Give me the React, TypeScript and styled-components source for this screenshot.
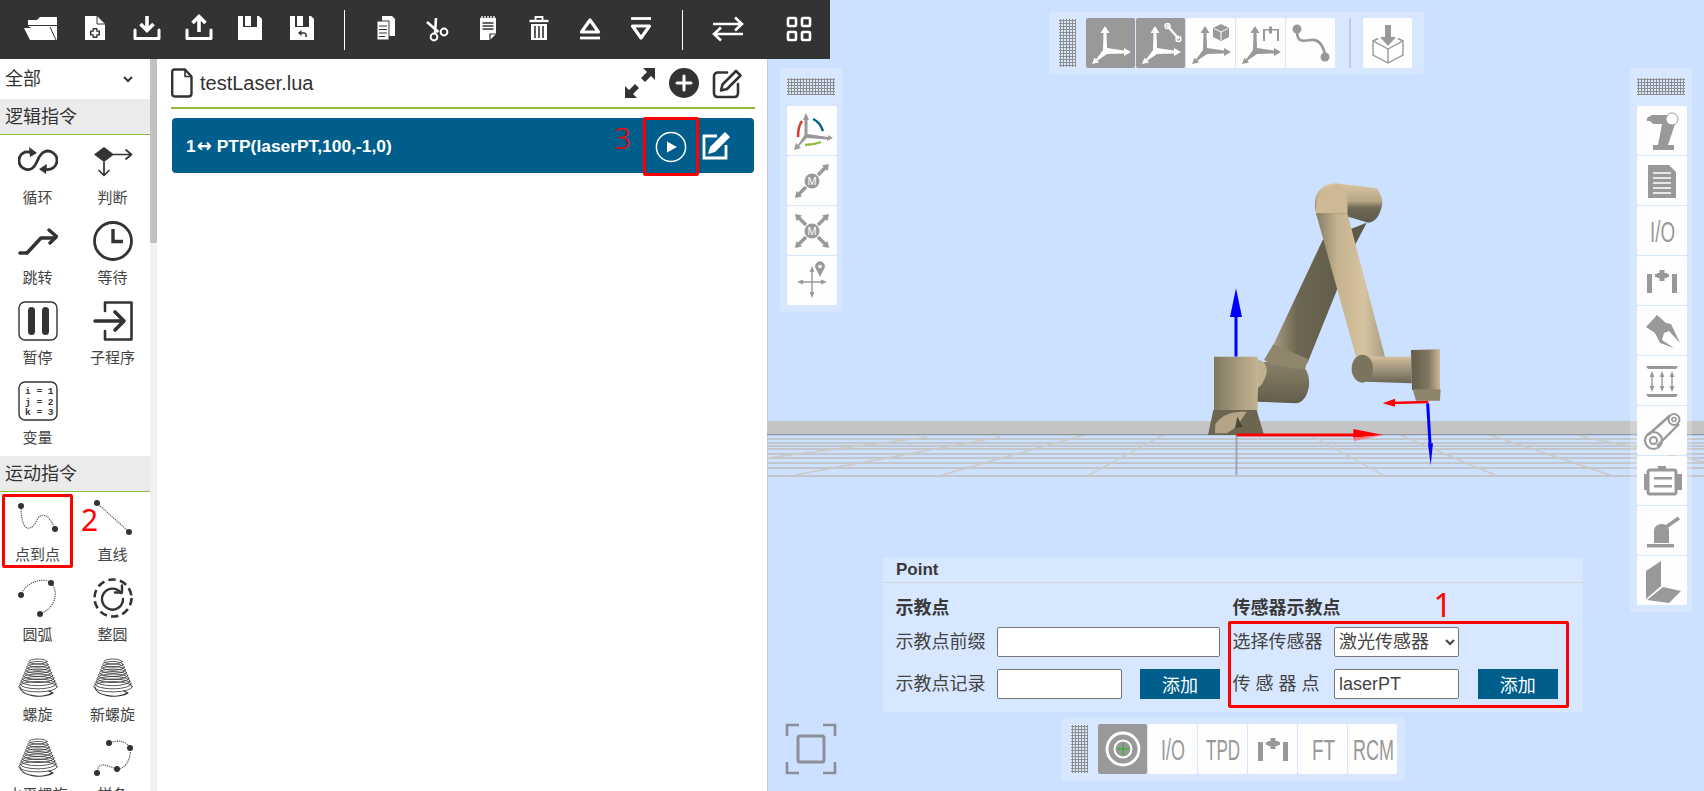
import React from 'react';
import styled, { createGlobalStyle } from 'styled-components';

const FONT = `"Liberation Sans", "Noto Sans CJK SC", sans-serif`;
const BLUE = '#005e8c';
const GREEN = '#8fbc3a';

const GlobalStyle = createGlobalStyle`
    html, body {
        margin: 0;
        padding: 0;
        height: 100%;
        overflow: hidden;
        background: #fff;
    }
    body, input, select, button {
        font-family: ${FONT};
    }
`;

const Page = styled.div`
    width: 1704px;
    height: 791px;
    display: flex;
    overflow: hidden;
    color: #333;
`;

const LeftPane = styled.div`
    width: 767px;
    flex-shrink: 0;
    display: flex;
    flex-direction: column;
`;

const WorkArea = styled.div`
    display: flex;
    flex: 1;
`;

/* ---------- top toolbar ---------- */

const Toolbar = styled.div`
    width: 830px;
    height: 59px;
    flex-shrink: 0;
    background: #333;
    display: flex;
    align-items: center;
    padding: 0 0 3px 15px;
    box-sizing: border-box;
    position: relative;
    z-index: 3;
    color: #fff;
    overflow: hidden;
`;

const ToolGroup = styled.div<{ $pitch: number }>`
    display: flex;
    flex-shrink: 0;
    & > div {
        width: ${(p) => p.$pitch}px;
    }
`;

const ToolCell = styled.div<{ $after?: number }>`
    display: flex;
    justify-content: center;
    margin-right: ${(p) => p.$after ?? 0}px;
`;

const ToolDivider = styled.span<{ $left: number; $right: number }>`
    width: 1px;
    height: 40px;
    flex-shrink: 0;
    margin: 3px ${(p) => p.$right}px 0 ${(p) => p.$left}px;
    background: #fff;
`;

const T = ({ children }: { children: React.ReactNode }) => (
    <ToolCell>
        <svg width="36" height="36" viewBox="0 0 36 36" fill="none" stroke="none">
            {children}
        </svg>
    </ToolCell>
);

const SaveBody = () => (
    <>
        <path d="M6 6H27L30 9V30H6Z" fill="#fff" />
        <rect x="11" y="6" width="14" height="11" fill="#333" />
        <rect x="13" y="6" width="6" height="10" fill="#fff" />
        <rect x="19" y="7" width="3" height="9" fill="#333" />
    </>
);

/* ---------- sidebar ---------- */

const Sidebar = styled.div`
    width: 157px;
    flex-shrink: 0;
    display: flex;
    height: 732px;
`;

const SideList = styled.div`
    width: 150px;
    overflow: hidden;
`;

const ScrollTrack = styled.div`
    width: 7px;
    background: #f1f1f1;
`;

const ScrollThumb = styled.div`
    height: 184px;
    background: #c1c1c1;
`;

const FilterSelect = styled.select`
    display: block;
    width: 136px;
    height: 40px;
    border: none;
    outline: none;
    background: transparent;
    font-size: 18px;
    color: #333;
    padding: 0 0 0 1px;
`;

const GroupTitle = styled.div<{ $first?: boolean }>`
    height: 36px;
    line-height: 36px;
    padding-left: 5px;
    font-size: 18px;
    background: #ebebeb;
    border-bottom: 1.5px solid ${GREEN};
    box-sizing: border-box;
    margin-top: ${(p) => (p.$first ? 0 : 1)}px;
`;

const CommandGrid = styled.div`
    display: grid;
    grid-template-columns: 75px 75px;
    grid-auto-rows: 80px;
`;

const Command = styled.div<{ $marked?: boolean }>`
    position: relative;
    display: flex;
    flex-direction: column;
    align-items: center;
    padding-top: 6px;
    box-sizing: border-box;
    font-size: 15px;
    line-height: 20px;
    color: #444;
    & > span {
        margin-top: 7px;
    }
    ${(p) =>
        p.$marked &&
        `&::after {
            content: '';
            position: absolute;
            top: 2px;
            left: 2px;
            width: 71px;
            height: 74px;
            box-sizing: border-box;
            border: 3px solid #f00;
            border-radius: 2px;
        }`}
`;

const Annotation = styled.i<{ $size: number; $left: number; $top: number; $light?: boolean }>`
    position: absolute;
    left: ${(p) => p.$left}px;
    top: ${(p) => p.$top}px;
    font-family: "Noto Sans", sans-serif;
    font-style: normal;
    font-weight: ${(p) => (p.$light ? 300 : 400)};
    font-size: ${(p) => p.$size}px;
    line-height: 1;
    color: #f00;
    z-index: 2;
`;

const I = ({ children }: { children: React.ReactNode }) => (
    <svg width="40" height="40" viewBox="0 0 40 40" fill="none" stroke="#333" strokeLinecap="round" strokeLinejoin="round">
        {children}
    </svg>
);

const Dot = ({ x, y }: { x: number; y: number }) => <circle cx={x} cy={y} r="3" fill="#333" stroke="none" />;

const DottedLine = ({ d }: { d: string }) => (
    <path d={d} strokeWidth="1.1" strokeDasharray="1.2 1" strokeLinecap="butt" stroke="#444" />
);

const Coil = () => {
    const rings = [0, 1, 2, 3, 4, 5, 6, 7, 8, 9];
    return (
        <>
            {rings.map((n) => (
                <ellipse key={n} cx="20" cy={3.5 + n * 2.8} rx={9 + n * 1.15} ry={2.5 + n * 0.3} strokeWidth="0.8" />
            ))}
            <path d="M2 29C3 38 24 41 34 35" strokeWidth="1.1" />
            <path d="M31 33L35 35L31 37" strokeWidth="1.1" />
        </>
    );
};

const commandsLogic: [string, React.ReactNode][] = [
    ['循环', (
        <I>
            <path strokeWidth="2.8" d="M14 12C7 9 1 13 1 19.5C1 26 7 30 13 28C20 25 19 14 26 11C32 8 39 13 39 19C39 26 33 30 26 28" />
            <path fill="#333" stroke="none" d="M11 6L19 12L12 16Z" />
            <path fill="#333" stroke="none" d="M29 23L21 28L28 33Z" />
        </I>
    )],
    ['判断', (
        <I>
            <path fill="#333" stroke="none" d="M1 13.5L11 6L21 13.5L11 21Z" />
            <path strokeWidth="1.7" d="M21 13.5H38M33 9L38.5 13.5L33 18M11 21V34M6 29.5L11 34.5L16 29.5" />
        </I>
    )],
    ['跳转', (
        <I>
            <path strokeWidth="3.6" d="M2 32H9L23 17H37" />
            <path strokeWidth="3.4" d="M31 9L38.5 15.5L32 22" />
        </I>
    )],
    ['等待', (
        <I>
            <circle cx="20" cy="20" r="18.5" strokeWidth="2.8" />
            <path strokeWidth="3.4" strokeLinecap="butt" strokeLinejoin="miter" d="M20 8V20.5H30" />
        </I>
    )],
    ['暂停', (
        <I>
            <rect x="1" y="1" width="38" height="38" rx="6" strokeWidth="1.4" />
            <rect x="10" y="6" width="7" height="28" rx="3.5" fill="#333" stroke="none" />
            <rect x="24" y="6" width="7" height="28" rx="3.5" fill="#333" stroke="none" />
        </I>
    )],
    ['子程序', (
        <I>
            <path strokeWidth="2.6" d="M12 10V1.5H38.5V38.5H12V30" />
            <path strokeWidth="3.6" d="M2 20H30M22 11L31 20L22 29" />
        </I>
    )],
    ['变量', (
        <I>
            <rect x="1" y="1" width="38" height="38" rx="6" strokeWidth="1.4" />
            <g fontFamily='"Liberation Mono", monospace' fontSize="9.5" fontWeight="700" fill="#333" stroke="none">
                <text x="7" y="13">i = 1</text>
                <text x="7" y="23.5">j = 2</text>
                <text x="7" y="34">k = 3</text>
            </g>
        </I>
    )],
];

const commandsMove: [string, React.ReactNode, boolean?][] = [
    ['点到点', (
        <I>
            <DottedLine d="M3 8C3 34 12 34 18 24C22 14 30 14 37 31" />
            <Dot x={3} y={8} />
            <Dot x={37} y={31} />
        </I>
    ), true],
    ['直线', (
        <I>
            <DottedLine d="M4 5L36 34" />
            <Dot x={4} y={5} />
            <Dot x={36} y={34} />
        </I>
    )],
    ['圆弧', (
        <I>
            <DottedLine d="M3 17C6 5 26 -2 33 5C41 13 38 30 22 36" />
            <Dot x={3} y={17} />
            <Dot x={33} y={5} />
            <Dot x={22} y={36} />
        </I>
    )],
    ['整圆', (
        <I>
            <circle cx="20" cy="20" r="18.5" strokeWidth="2.6" strokeDasharray="7.5 4.2" strokeLinecap="butt" />
            <path strokeWidth="2.4" d="M28 15A10.5 10.5 0 1 0 30 21" />
            <path strokeWidth="2.4" d="M22 14.5H29V7.5" />
        </I>
    )],
    ['螺旋', <I><Coil /></I>],
    ['新螺旋', <I><Coil /></I>],
    ['水平螺旋', <I><Coil /></I>],
    ['样条', (
        <I>
            <DottedLine d="M4 35C5 22 14 28 24 31C32 32 39 20 37 10C33 2 24 2 16 5" />
            <Dot x={4} y={35} />
            <Dot x={24} y={31} />
            <Dot x={37} y={10} />
            <Dot x={16} y={5} />
        </I>
    )],
];

/* ---------- program editor ---------- */

const Editor = styled.div`
    flex: 1;
    padding: 0 12px 0 14px;
`;

const FileBar = styled.div`
    height: 48px;
    display: flex;
    align-items: center;
    gap: 7px;
    border-bottom: 2px solid ${GREEN};
    box-sizing: content-box;
`;

const FileName = styled.span`
    font-size: 20px;
    color: #333;
    flex: 1;
`;

const FileActions = styled.div`
    display: flex;
    align-items: center;
    gap: 13px;
    margin-right: 12px;
`;

const ProgramRow = styled.div`
    position: relative;
    margin: 9px 1px 0;
    height: 55px;
    background: ${BLUE};
    border-radius: 4px;
    display: flex;
    align-items: center;
    padding-left: 14px;
    color: #fff;
    font-size: 17.4px;
    font-weight: 700;
`;

const RowText = styled.span`
    flex: 1;
    white-space: nowrap;
`;

const RowArrow = styled.span`
    font-family: "DejaVu Sans", sans-serif;
    font-size: 18px;
    margin: 0 5px 0 1px;
`;

const PlayBox = styled.div`
    width: 56px;
    height: 59px;
    margin-top: 2px;
    box-sizing: border-box;
    border: 3px solid #f00;
    border-radius: 2px;
    display: flex;
    align-items: center;
    justify-content: center;
`;

const RowEdit = styled.div`
    margin: 0 23px 0 3px;
    display: flex;
`;

/* ---------- 3d canvas ---------- */

const Canvas = styled.div`
    position: relative;
    flex: 1;
    height: 791px;
    background: #cce0ff;
    box-shadow: inset 1px 0 #c6cad0;
    overflow: hidden;
`;

const Scene = styled.svg`
    position: absolute;
    inset: 0;
`;

const Floating = styled.div`
    position: absolute;
    display: flex;
    box-sizing: border-box;
    background: rgba(255, 255, 255, 0.22);
    border-radius: 3px;
`;

const TopPanel = styled(Floating)`
    left: 282px;
    top: 12px;
    width: 375px;
    height: 62px;
    padding: 6px 0 0 10px;
    gap: 1px;
`;

const BottomPanel = styled(Floating)`
    left: 294px;
    top: 718px;
    width: 344px;
    height: 63px;
    padding: 6px 0 0 10px;
    gap: 1px;
`;

const SidePanel = styled(Floating)`
    top: 68px;
    flex-direction: column;
    padding: 10px 0 0 6.5px;
    gap: 1px;
    width: 62px;
`;

const LeftPanel = styled(SidePanel)`
    left: 13px;
    height: 244px;
`;

const RightPanel = styled(SidePanel)`
    left: 863px;
    height: 544px;
`;

const Grip = styled.div<{ $vertical?: boolean }>`
    width: ${(p) => (p.$vertical ? 17 : 48)}px;
    height: ${(p) => (p.$vertical ? 48 : 17)}px;
    flex-shrink: 0;
    margin: ${(p) => (p.$vertical ? '1px 9px 0 0' : '0 0 10px 0')};
    background-image: radial-gradient(circle, #8e8e8e 1px, transparent 1.2px);
    background-size: 3px 3px;
`;

const ToolButton = styled.div<{ $active?: boolean; $tall?: boolean }>`
    width: ${(p) => (p.$tall ? 49 : 50)}px;
    height: ${(p) => (p.$tall ? 50 : 49)}px;
    flex-shrink: 0;
    display: flex;
    align-items: center;
    justify-content: center;
    border-radius: 2px;
    background: ${(p) => (p.$active ? '#999' : 'rgba(255, 255, 255, 0.96)')};
    color: ${(p) => (p.$active ? '#fff' : '#999')};
`;

const PanelRule = styled.span`
    width: 2px;
    height: 50px;
    margin: 0 11px 0 13px;
    background: #c6cad0;
`;

const FocusButton = styled.div`
    position: absolute;
    left: 18px;
    top: 723px;
    color: #8a8f96;
    display: flex;
`;

const B = ({ children }: { children: React.ReactNode }) => (
    <svg width="48" height="48" viewBox="0 0 48 48" fill="currentColor" stroke="none">
        {children}
    </svg>
);

const Axes = () => (
    <path d="M16 31L16.5 14H13.5L18 7L22.5 14H19.5L20 29L37 31.5V29L44 33L37 37V34.5L20 35L10.5 41.5L12 43.5L5 45L7.5 38.5L9 40.5Z" />
);

const Stretched = ({ x, y, w, size = 30, children }: { x: number; y: number; w: number; size?: number; children: string }) => (
    <text x={x} y={y} textLength={w} lengthAdjust="spacingAndGlyphs" fontFamily='"Liberation Sans", sans-serif' fontSize={size} fill="currentColor">
        {children}
    </text>
);

const MBadge = ({ cx, cy }: { cx: number; cy: number }) => (
    <>
        <circle cx={cx} cy={cy} r="7.5" />
        <text x={cx} y={cy + 4} textAnchor="middle" fontSize="11" fontFamily='"Liberation Sans", sans-serif' fill="#fff">M</text>
    </>
);

const DiagArrow = ({ x1, y1, x2, y2, thin }: { x1: number; y1: number; x2: number; y2: number; thin?: boolean }) => {
    const a = (Math.atan2(y2 - y1, x2 - x1) * 180) / Math.PI;
    const len = Math.hypot(x2 - x1, y2 - y1);
    const s = thin ? 0.7 : 1.7;
    const h = thin ? 2.4 : 4;
    return (
        <g transform={`translate(${x1} ${y1}) rotate(${a})`}>
            <path d={`M0 -${s}H${len - 6}V-${h}L${len} 0L${len - 6} ${h}V${s}H0Z`} />
        </g>
    );
};

const GripperShape = () => (
    <>
        <rect x="9" y="17" width="5" height="19" />
        <rect x="34" y="17" width="5" height="19" />
        <rect x="17" y="17" width="14" height="3" />
        <rect x="21.5" y="13" width="5" height="11" />
        <rect x="19" y="16" width="10" height="5" />
    </>
);

const Point3DCube = () => (
    <>
        <path d="M34 5L42 9V18L34 22L26 18V9Z" />
        <path d="M27 9.5L34 13L41 9.5M34 13V21" stroke="#fff" strokeWidth="1" fill="none" />
    </>
);

/* ---------- point dialog ---------- */

const PointPanel = styled.div`
    position: absolute;
    left: 116px;
    top: 558px;
    width: 700px;
    height: 154px;
    background: rgba(255, 255, 255, 0.22);
    color: #444;
`;

const PointHeader = styled.div`
    height: 25px;
    line-height: 24px;
    padding-left: 13px;
    font-size: 17px;
    font-weight: 700;
    border-bottom: 1px solid #d3d6d8;
    box-sizing: border-box;
    color: #3a3a3a;
`;

const PointBody = styled.div`
    display: flex;
    gap: 12px;
    padding: 14px 12.5px 0;
`;

const PointColumn = styled.div`
    position: relative;
    width: 325px;
    display: flex;
    flex-direction: column;
`;

const PointHeading = styled.div`
    font-size: 18px;
    font-weight: 700;
    line-height: 22px;
    margin-bottom: 8px;
    color: #3a3a3a;
`;

const FormRow = styled.div`
    display: flex;
    align-items: center;
    height: 30px;
    margin-bottom: 12px;
`;

const FieldLabel = styled.label`
    width: 101.5px;
    flex-shrink: 0;
    font-size: 18px;
    white-space: nowrap;
    line-height: 30px;
    height: 30px;
`;

const TextField = styled.input<{ $width: number }>`
    width: ${(p) => p.$width}px;
    height: 30px;
    box-sizing: border-box;
    border: 1px solid #767676;
    border-radius: 2px;
    background: #fff;
    padding: 0 4px;
    font-size: 18px;
    color: #444;
    outline: none;
`;

const SelectField = styled.select`
    width: 125px;
    height: 30px;
    box-sizing: border-box;
    border: 1px solid #767676;
    border-radius: 2px;
    background: #fff;
    font-size: 18px;
    color: #444;
    outline: none;
`;

const AddButton = styled.button<{ $gap: number }>`
    width: 80px;
    height: 30px;
    margin-left: ${(p) => p.$gap}px;
    padding: 0;
    border: none;
    background: ${BLUE};
    color: #fff;
    font-size: 18px;
`;

const RedFrame = styled.div`
    position: absolute;
    left: -5px;
    top: 24px;
    width: 341px;
    height: 87px;
    box-sizing: border-box;
    border: 3px solid #f00;
    border-radius: 2px;
    pointer-events: none;
`;

const OverlayGradients = () => (
    <defs>
        <linearGradient id="armGrad" x1="0" y1="0" x2="1" y2="0">
            <stop offset="0" stopColor="#857c64" />
            <stop offset="0.3" stopColor="#c4b18e" />
            <stop offset="0.7" stopColor="#d6c3a0" />
            <stop offset="1" stopColor="#a89c7f" />
        </linearGradient>
        <linearGradient id="baseGrad" x1="0" y1="0" x2="1" y2="0">
            <stop offset="0" stopColor="#7f775f" />
            <stop offset="0.6" stopColor="#ab9e80" />
            <stop offset="1" stopColor="#c3b28f" />
        </linearGradient>
        <linearGradient id="lowerGrad" x1="0" y1="0" x2="1" y2="0">
            <stop offset="0" stopColor="#a89c7e" />
            <stop offset="0.25" stopColor="#6d6752" />
            <stop offset="1" stopColor="#5a5645" />
        </linearGradient>
        <linearGradient id="wristGrad" x1="0" y1="0" x2="0" y2="1">
            <stop offset="0" stopColor="#d2bf9b" />
            <stop offset="0.5" stopColor="#9d917a" />
            <stop offset="1" stopColor="#6a6451" />
        </linearGradient>
        <linearGradient id="flangeGrad" x1="0" y1="0" x2="1" y2="0">
            <stop offset="0" stopColor="#625d4b" />
            <stop offset="0.6" stopColor="#7f775f" />
            <stop offset="1" stopColor="#cbb997" />
        </linearGradient>
        <linearGradient id="jointGrad" x1="0" y1="0" x2="0" y2="1">
            <stop offset="0" stopColor="#8b8269" />
            <stop offset="1" stopColor="#625d4b" />
        </linearGradient>
        <linearGradient id="elbowGrad" x1="0" y1="0" x2="0" y2="1">
            <stop offset="0" stopColor="#d9c6a3" />
            <stop offset="0.45" stopColor="#b7a785" />
            <stop offset="0.62" stopColor="#6f6955" />
            <stop offset="1" stopColor="#5f5a48" />
        </linearGradient>
    </defs>
);

const FloorGrid = () => {
    const rows = [438, 442, 445, 448, 453, 457, 462, 467, 475];
    const rays: [number, number, number, number][] = [
        [767, 458, 927, 437], [795, 475, 1000, 437], [942, 475, 1084, 435], [1089, 475, 1167, 433],
        [1383, 475, 1310, 435], [1495, 475, 1400, 435], [1610, 475, 1490, 435], [1704, 462, 1580, 436],
    ];
    return (
        <g>
            <rect x="767" y="421" width="937" height="14" fill="#c3c4c3" />
            {rows.map((y) => (
                <rect key={y} x="767" y={y} width="937" height="2" fill="#c2c6cb" />
            ))}
            {rays.map(([a, b, c, d]) => (
                <line key={a} x1={a} y1={b} x2={c} y2={d} stroke="#cdc9c3" strokeWidth="1.4" />
            ))}
            <rect x="767" y="434" width="937" height="1.3" fill="#8f969c" />
            <rect x="1235.5" y="435" width="1.8" height="40" fill="#9ba1a8" />
        </g>
    );
};

const Robot = () => (
    <g transform="translate(1100 160) scale(0.33333)">
        <path d="M408 590V470" stroke="#00f" strokeWidth="9" />
        <path d="M408 385L390 471H426Z" fill="#00f" />
        <path d="M520 555L668 240L800 188L760 265L710 392L622 610Z" fill="url(#lowerGrad)" />
        <path d="M480 610C540 590 590 610 615 625C640 660 625 725 590 730L470 725Z" fill="url(#jointGrad)" />
        <path d="M492 600L520 553L625 597L615 626C570 628 525 615 492 600Z" fill="#8f866c" />
        <path d="M473 600C495 600 505 625 498 645C490 670 480 680 472 685Z" fill="#c2b18e" />
        <path d="M342 590H473V752H342Z" fill="url(#baseGrad)" />
        <path d="M340 750H470L492 825H324Z" fill="#6c6651" />
        <path d="M346 792C370 760 395 755 440 755L410 800L380 820H345Z" fill="#b5a586" />
        <path d="M412 770L428 800L405 805Z" fill="#4b4838" />
        <path d="M645 130C645 90 675 70 710 70L830 85C845 105 850 125 845 140C838 170 825 185 805 188L745 170L652 172C648 160 645 145 645 130Z" fill="url(#elbowGrad)" />
        <path d="M648 160L768 590L855 590L742 160Z" fill="url(#armGrad)" />
        <path d="M648 160C645 130 650 90 710 72C735 74 745 100 742 160Z" fill="#cdb996" />
        <path d="M800 590H935V670L800 665Z" fill="url(#wristGrad)" />
        <ellipse cx="787" cy="626" rx="32" ry="42" fill="#7b745d" />
        <path d="M933 570L1020 568V692L936 690Z" fill="url(#flangeGrad)" />
        <path d="M938 688H1022L1020 722H948Z" fill="#8d8469" />
        <path d="M985 726L870 729" stroke="#f00" strokeWidth="8" />
        <path d="M885 716L848 730L885 740Z" fill="#f00" />
        <path d="M983 730L990 850" stroke="#00f" strokeWidth="9" />
        <path d="M984 850L999 850L992 916Z" fill="#00f" />
        <path d="M410 825H770" stroke="#f00" strokeWidth="9" />
        <path d="M760 807L850 825L760 833Z" fill="#f00" />
        <path d="M760 833L850 825L762 843Z" fill="#f77" />
    </g>
);

const App = () => {
    return (
        <Page>
            <GlobalStyle />
            <LeftPane>
                <Toolbar>
                    <ToolGroup $pitch={51.6}>
                        <ToolCell $after={3}>
                            <svg width="36" height="36" viewBox="0 0 36 36">
                                <path d="M5 10H14L17 7H34V30H28L5 16Z" fill="#fff" />
                                <path d="M1 18H27L33 30H7Z" fill="#fff" />
                                <path d="M27 17L33 30" stroke="#333" strokeWidth="1" />
                                <path d="M5 15.5H34" stroke="#333" strokeWidth="1" />
                            </svg>
                        </ToolCell>
                        <T>
                            <path d="M8 6H20L28 14V30H8Z" fill="#fff" />
                            <path d="M20 6V14H28" fill="none" stroke="#333" strokeWidth="1" />
                            <path d="M18 18V28M13 23H23" stroke="#333" strokeWidth="5" />
                            <path d="M18 19.5V26.5M14.5 23H21.5" stroke="#fff" strokeWidth="2.4" />
                        </T>
                        <T>
                            <path d="M6 20V28.5H30V20" stroke="#fff" strokeWidth="3" strokeLinecap="round" strokeLinejoin="round" />
                            <path d="M18 6V20M11.5 14L18 20.5L24.5 14" stroke="#fff" strokeWidth="3.6" strokeLinejoin="miter" />
                        </T>
                        <T>
                            <path d="M6 20V28.5H30V20" stroke="#fff" strokeWidth="3" strokeLinecap="round" strokeLinejoin="round" />
                            <path d="M18 22V7M11.5 13L18 6.5L24.5 13" stroke="#fff" strokeWidth="3.6" strokeLinejoin="miter" />
                        </T>
                        <T><SaveBody /></T>
                        <T>
                            <SaveBody />
                            <path d="M14 23L17.5 20V26Z" fill="#333" />
                            <path d="M16 23H20C22 23 22.5 25 22 27" stroke="#333" strokeWidth="1.5" />
                        </T>
                    </ToolGroup>
                    <ToolDivider $left={16} $right={16} />
                    <ToolGroup $pitch={51}>
                        <T>
                            <path d="M14 6H24L27 9V26H14Z" fill="#fff" />
                            <path d="M9 11H21V30H9Z" fill="#fff" stroke="#333" strokeWidth="1" />
                            <path d="M11 16H19M11 19.5H19M11 23H19M11 26.5H17" stroke="#333" strokeWidth="1.2" />
                        </T>
                        <T>
                            <path d="M8 12L19.5 22M17 8L16 24" stroke="#fff" strokeWidth="2.6" />
                            <circle cx="25" cy="22" r="3.4" stroke="#fff" strokeWidth="2" />
                            <circle cx="15" cy="27" r="3.4" stroke="#fff" strokeWidth="2" />
                        </T>
                        <T>
                            <path d="M10 8H26V24L20 30H10Z" fill="#fff" />
                            <path d="M12 6V10M15 6V10M18 6V10M21 6V10M24 6V10" stroke="#fff" strokeWidth="1.4" />
                            <path d="M12.5 13H23.5M12.5 16H23.5M12.5 19H23.5" stroke="#333" strokeWidth="1.4" />
                            <path d="M20 30V24H26" stroke="#333" strokeWidth="1.2" />
                        </T>
                        <T>
                            <path d="M8.5 11H27.5" stroke="#fff" strokeWidth="2.4" />
                            <path d="M14.5 10V7H21.5V10" stroke="#fff" strokeWidth="1.8" />
                            <path d="M10 14H26V30H10Z" fill="#fff" />
                            <path d="M14 16V28M18 16V28M22 16V28" stroke="#333" strokeWidth="1.6" />
                        </T>
                        <T>
                            <path d="M18 10L26.5 22H9.5Z" stroke="#fff" strokeWidth="3.2" strokeLinejoin="round" />
                            <path d="M8 28H28" stroke="#fff" strokeWidth="2.8" />
                        </T>
                        <T>
                            <path d="M8 8.5H28" stroke="#fff" strokeWidth="2.8" />
                            <path d="M18 28L9.5 16H26.5Z" stroke="#fff" strokeWidth="3.2" strokeLinejoin="round" />
                        </T>
                    </ToolGroup>
                    <ToolDivider $left={15.5} $right={9.4} />
                    <ToolGroup $pitch={71}>
                        <T>
                            <path d="M3 14H31M25 7.5L32 14L25 20.5" stroke="#fff" strokeWidth="2.6" />
                            <path d="M33 24H5M11 17.5L4 24L11 30.5" stroke="#fff" strokeWidth="2.6" />
                        </T>
                        <T>
                            <rect x="7" y="8" width="8" height="8" rx="1" stroke="#fff" strokeWidth="2.6" />
                            <rect x="21" y="8" width="8" height="8" rx="1" stroke="#fff" strokeWidth="2.6" />
                            <rect x="7" y="22" width="8" height="8" rx="1" stroke="#fff" strokeWidth="2.6" />
                            <rect x="21" y="22" width="8" height="8" rx="1" stroke="#fff" strokeWidth="2.6" />
                        </T>
                    </ToolGroup>
                </Toolbar>
                <WorkArea>
                    <Sidebar>
                        <SideList>
                            <FilterSelect defaultValue="all">
                                <option value="all">全部</option>
                            </FilterSelect>
                            <GroupTitle $first>逻辑指令</GroupTitle>
                            <CommandGrid>
                                {commandsLogic.map(([label, icon]) => (
                                    <Command key={label}>
                                        {icon}
                                        <span>{label}</span>
                                    </Command>
                                ))}
                            </CommandGrid>
                            <GroupTitle>运动指令</GroupTitle>
                            <CommandGrid>
                                {commandsMove.map(([label, icon, marked]) => (
                                    <Command key={label} $marked={marked}>
                                        {icon}
                                        <span>{label}</span>
                                        {marked && <Annotation $size={30} $left={81} $top={13}>2</Annotation>}
                                    </Command>
                                ))}
                            </CommandGrid>
                        </SideList>
                        <ScrollTrack>
                            <ScrollThumb />
                        </ScrollTrack>
                    </Sidebar>
                    <Editor>
                        <FileBar>
                            <svg width="22" height="30" viewBox="0 0 22 30" fill="none" stroke="#333" strokeWidth="2.4" strokeLinejoin="round">
                                <path d="M3.5 1.5H14L20.5 8.5V25.5C20.5 27.5 19.5 28.5 17.5 28.5H3.5C2 28.5 1.2 27.5 1.2 26V4C1.2 2.5 2 1.5 3.5 1.5Z" />
                                <path d="M14 1.5V8.5H20.5" strokeWidth="1.6" />
                            </svg>
                            <FileName>testLaser.lua</FileName>
                            <FileActions>
                                <svg width="32" height="32" viewBox="0 0 32 32" fill="#333">
                                    <path d="M19 1H31V13L27 9L21 15L17 11L23 5Z" />
                                    <path d="M13 31H1V19L5 23L11 17L15 21L9 27Z" />
                                </svg>
                                <svg width="30" height="30" viewBox="0 0 30 30">
                                    <circle cx="15" cy="15" r="15" fill="#333" />
                                    <path d="M15 8V22M8 15H22" stroke="#fff" strokeWidth="3" strokeLinecap="round" />
                                </svg>
                                <svg width="31" height="31" viewBox="0 0 31 31" fill="none" stroke="#333" strokeWidth="2.6" strokeLinecap="round" strokeLinejoin="round">
                                    <path d="M15 4.5H6C3.5 4.5 2 6 2 8.5V25C2 27.5 3.5 29 6 29H22C24.5 29 26 27.5 26 25V16" />
                                    <path d="M24 3L28.5 7.5L15 21L9 22.5L10.5 16.5Z" />
                                </svg>
                            </FileActions>
                        </FileBar>
                        <ProgramRow>
                            <RowText>1<RowArrow>↔</RowArrow>PTP(laserPT,100,-1,0)</RowText>
                            <Annotation $size={30} $left={442} $top={5} $light>3</Annotation>
                            <PlayBox>
                                <svg width="32" height="32" viewBox="0 0 32 32">
                                    <circle cx="16" cy="16" r="14.6" fill="none" stroke="#fff" strokeWidth="1.5" />
                                    <path d="M12 10.5L22 16L12 21.5Z" fill="#fff" />
                                </svg>
                            </PlayBox>
                            <RowEdit>
                                <svg width="29" height="29" viewBox="0 0 29 29">
                                    <path d="M15 5H2V27H24V14" fill="none" stroke="#fff" strokeWidth="2.8" />
                                    <path d="M23 1L28 6L13 21L6 23L8 16Z" fill="#fff" />
                                </svg>
                            </RowEdit>
                        </ProgramRow>
                    </Editor>
                </WorkArea>
            </LeftPane>

            <Canvas>
                <Scene width="937" height="791" viewBox="767 0 937 791">
                    <OverlayGradients />
                    <FloorGrid />
                    <Robot />
                </Scene>

                <TopPanel>
                    <Grip $vertical />
                    <ToolButton $active $tall><B><Axes /></B></ToolButton>
                    <ToolButton $active $tall>
                        <B>
                            <Axes />
                            <path d="M30 6L34 11L42 20" stroke="#fff" strokeWidth="2.4" fill="none" />
                            <circle cx="30.5" cy="7" r="2.5" fill="none" stroke="#fff" strokeWidth="1.4" />
                            <circle cx="41.5" cy="20" r="2.5" fill="none" stroke="#fff" strokeWidth="1.4" />
                        </B>
                    </ToolButton>
                    <ToolButton $tall><B><Axes /><Point3DCube /></B></ToolButton>
                    <ToolButton $tall>
                        <B>
                            <Axes />
                            <rect x="26" y="10" width="2" height="12" />
                            <rect x="40" y="10" width="2" height="12" />
                            <rect x="28" y="10" width="12" height="1.5" />
                            <rect x="32" y="7.5" width="3" height="7" />
                        </B>
                    </ToolButton>
                    <ToolButton $tall>
                        <B>
                            <circle cx="10" cy="10" r="4.5" />
                            <circle cx="38" cy="38" r="4.5" />
                            <path d="M10 12C10 24 16 22 24 21C32 20 36 26 38 36" fill="none" stroke="currentColor" strokeWidth="2.6" />
                        </B>
                    </ToolButton>
                    <PanelRule />
                    <ToolButton $tall>
                        <B>
                            <path d="M21 6H27V18H32L24 27L16 18H21Z" />
                            <path d="M9 22L14 19.5M39 22L34 19.5M9 22V36L24 44L39 36V22L24 30ZM24 30V44" fill="none" stroke="currentColor" strokeWidth="1.4" />
                        </B>
                    </ToolButton>
                </TopPanel>

                <LeftPanel>
                    <Grip />
                    <ToolButton>
                        <B>
                            <path d="M18 6L21 13H19.5V27L40 30V28L45 31L39 34V32.5L19 31L11 39L13 41L6 43L8 36L10 38L16.5 28V13H15Z" />
                            <path d="M14 14C11 18 10 23 10 30" stroke="#d8412f" strokeWidth="2.6" fill="none" />
                            <path d="M25 12C30 14 33 18 35 24" stroke="#005e8c" strokeWidth="2.4" fill="none" />
                            <path d="M17 38C23 38 28 37 33 35" stroke="#8fbc3a" strokeWidth="2.4" fill="none" />
                        </B>
                    </ToolButton>
                    <ToolButton>
                        <B>
                            <DiagArrow x1={30} y1={18} x2={41} y2={7} />
                            <DiagArrow x1={18} y1={30} x2={7} y2={41} />
                            <MBadge cx={24} cy={24} />
                        </B>
                    </ToolButton>
                    <ToolButton>
                        <B>
                            <DiagArrow x1={30} y1={18} x2={41} y2={7} />
                            <DiagArrow x1={18} y1={30} x2={7} y2={41} />
                            <DiagArrow x1={18} y1={18} x2={7} y2={7} />
                            <DiagArrow x1={30} y1={30} x2={41} y2={41} />
                            <MBadge cx={24} cy={24} />
                        </B>
                    </ToolButton>
                    <ToolButton>
                        <B>
                            <DiagArrow thin x1={24} y1={25} x2={24} y2={9} />
                            <DiagArrow thin x1={24} y1={25} x2={24} y2={41} />
                            <DiagArrow thin x1={24} y1={25} x2={9} y2={25} />
                            <DiagArrow thin x1={24} y1={25} x2={39} y2={25} />
                            <path d="M32 20L28 12A4.8 4.8 0 1 1 36 12Z" />
                            <circle cx="32" cy="9.5" r="1.8" fill="#fff" />
                        </B>
                    </ToolButton>
                </LeftPanel>

                <RightPanel>
                    <Grip />
                    <ToolButton>
                        <B>
                            <path d="M9 11L14 8H32V17H15L12 14H9Z" />
                            <path d="M24 17H37L30 38H36V43H15V38H20Z" />
                            <circle cx="34" cy="12" r="6" fill="#fff" stroke="currentColor" strokeWidth="1" />
                        </B>
                    </ToolButton>
                    <ToolButton>
                        <B>
                            <path d="M10 8H31L38 15V41H10Z" />
                            <path d="M15 16H33M15 21H33M15 26H33M15 31H33M15 36H33" stroke="#fff" strokeWidth="1.6" />
                        </B>
                    </ToolButton>
                    <ToolButton><B><Stretched x={12} y={35} w={25}>I/O</Stretched></B></ToolButton>
                    <ToolButton><B><GripperShape /></B></ToolButton>
                    <ToolButton>
                        <B>
                            <path d="M8 20L19 8L28 16L33 17L42 36L31 24L26 26L24 33L36 41L22 36L17 26Z" />
                        </B>
                    </ToolButton>
                    <ToolButton>
                        <B>
                            <path d="M8 9H40L38 12H10Z" />
                            <path d="M8 37H40L38 40H10Z" />
                            <DiagArrow thin x1={14} y1={24} x2={14} y2={14} />
                            <DiagArrow thin x1={14} y1={24} x2={14} y2={35} />
                            <DiagArrow thin x1={24} y1={24} x2={24} y2={14} />
                            <DiagArrow thin x1={24} y1={24} x2={24} y2={35} />
                            <DiagArrow thin x1={34} y1={24} x2={34} y2={14} />
                            <DiagArrow thin x1={34} y1={24} x2={34} y2={35} />
                        </B>
                    </ToolButton>
                    <ToolButton>
                        <B>
                            <g fill="none" stroke="currentColor">
                                <path d="M10 28L32 8.5M19 39L41 17" strokeWidth="2.4" />
                                <circle cx="15.5" cy="33.5" r="8.5" strokeWidth="2.2" />
                                <circle cx="15.5" cy="33.5" r="3.5" strokeWidth="2" />
                                <circle cx="36" cy="12.5" r="5.5" strokeWidth="2" />
                                <circle cx="36" cy="12.5" r="2" strokeWidth="1.6" />
                            </g>
                        </B>
                    </ToolButton>
                    <ToolButton>
                        <B>
                            <rect x="10" y="13" width="28" height="24" rx="2" fill="none" stroke="currentColor" strokeWidth="3" />
                            <rect x="6" y="17" width="4" height="16" />
                            <rect x="38" y="17" width="6" height="16" />
                            <rect x="20" y="9" width="8" height="3" />
                            <rect x="16" y="20" width="18" height="2.5" />
                            <rect x="16" y="28" width="18" height="2.5" />
                        </B>
                    </ToolButton>
                    <ToolButton>
                        <B>
                            <rect x="9" y="37" width="27" height="3.5" />
                            <path d="M16 36V24C16 19 20 17 24 17C28 17 31 20 31 24V36Z" />
                            <path d="M28 20L41 11" stroke="currentColor" strokeWidth="3.4" />
                        </B>
                    </ToolButton>
                    <ToolButton>
                        <B>
                            <path d="M8 14L23 4V29L8 42Z" />
                            <path d="M25 30L43 34L31 46L9 43Z" />
                        </B>
                    </ToolButton>
                </RightPanel>

                <PointPanel>
                    <PointHeader>Point</PointHeader>
                    <PointBody>
                        <PointColumn>
                            <PointHeading>示教点</PointHeading>
                            <FormRow>
                                <FieldLabel>示教点前缀</FieldLabel>
                                <TextField $width={223} />
                            </FormRow>
                            <FormRow>
                                <FieldLabel>示教点记录</FieldLabel>
                                <TextField $width={125} />
                                <AddButton $gap={18}>添加</AddButton>
                            </FormRow>
                        </PointColumn>
                        <PointColumn>
                            <PointHeading>传感器示教点</PointHeading>
                            <FormRow>
                                <FieldLabel>选择传感器</FieldLabel>
                                <SelectField defaultValue="laser">
                                    <option value="laser">激光传感器</option>
                                </SelectField>
                            </FormRow>
                            <FormRow>
                                <FieldLabel>传 感 器 点</FieldLabel>
                                <TextField $width={125} defaultValue="laserPT" />
                                <AddButton $gap={19}>添加</AddButton>
                            </FormRow>
                            <RedFrame />
                            <Annotation $size={32} $left={201} $top={-8}>1</Annotation>
                        </PointColumn>
                    </PointBody>
                </PointPanel>

                <BottomPanel>
                    <Grip $vertical />
                    <ToolButton $active $tall>
                        <B>
                            <g fill="none" stroke="currentColor">
                                <circle cx="24" cy="24" r="16" strokeWidth="2.8" />
                                <circle cx="24" cy="24" r="8.5" strokeWidth="2" />
                            </g>
                            <path d="M18 24H30M24 18V30" stroke="#3fae3a" strokeWidth="1.4" />
                        </B>
                    </ToolButton>
                    <ToolButton $tall><B><Stretched x={12} y={35} w={24}>I/O</Stretched></B></ToolButton>
                    <ToolButton $tall><B><Stretched x={7} y={35} w={34}>TPD</Stretched></B></ToolButton>
                    <ToolButton $tall><B><GripperShape /></B></ToolButton>
                    <ToolButton $tall><B><Stretched x={13} y={35} w={23}>FT</Stretched></B></ToolButton>
                    <ToolButton $tall><B><Stretched x={4} y={35} w={41}>RCM</Stretched></B></ToolButton>
                </BottomPanel>

                <FocusButton>
                    <svg width="52" height="52" viewBox="0 0 52 52" fill="none" stroke="currentColor" strokeWidth="2.6">
                        <path d="M2 13V2H14M38 2H50V13M50 39V50H38M14 50H2V39" />
                        <rect x="13" y="13" width="26" height="26" rx="2" strokeWidth="3" />
                    </svg>
                </FocusButton>
            </Canvas>
        </Page>
    );
};

export default App;
